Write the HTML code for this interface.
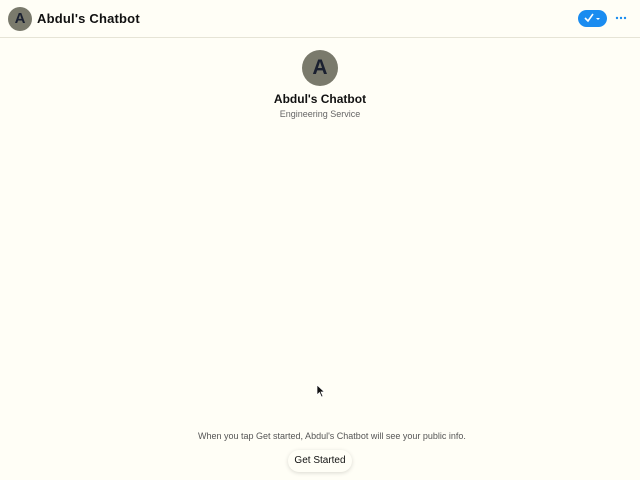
<!DOCTYPE html>
<html><head><style>
body{margin:0;width:640px;height:480px;background:#fffef6;font-family:"Liberation Sans",sans-serif;position:relative;overflow:hidden}
.hdr{position:absolute;left:0;top:0;width:640px;height:37px;border-bottom:1px solid #e6e4d6}
.av{position:absolute;border-radius:50%;background:#7a7a6c;color:#1a2030;font-weight:bold;text-align:center}
.t{position:absolute;white-space:nowrap}
</style></head><body>
<div class="hdr"></div>
<div class="av" style="left:8px;top:7px;width:24px;height:24px;line-height:24px;font-size:15px">A</div>
<div class="t" style="left:37px;top:11px;font-size:13px;font-weight:bold;color:#111;letter-spacing:0.2px">Abdul's Chatbot</div>
<div style="position:absolute;left:578px;top:10px;width:29px;height:17px;border-radius:9px;background:#1a8cf0"></div>
<svg style="position:absolute;left:583px;top:12px" width="20" height="12"><path d="M2 6 L5 9 L10 2" stroke="#fff" stroke-width="1.6" fill="none"/><path d="M13 6 L17 6 L15 8Z" fill="#fff"/></svg>
<svg style="position:absolute;left:615px;top:16px" width="12" height="4"><circle cx="2" cy="2" r="1.2" fill="#1a8cf0"/><circle cx="6" cy="2" r="1.2" fill="#1a8cf0"/><circle cx="10" cy="2" r="1.2" fill="#1a8cf0"/></svg>
<div class="av" style="left:302px;top:50px;width:36px;height:36px;line-height:36px;font-size:21px">A</div>
<div class="t" style="left:0;width:640px;text-align:center;top:92px;font-size:12px;font-weight:bold;color:#111">Abdul's Chatbot</div>
<div class="t" style="left:0;width:640px;text-align:center;top:109px;font-size:9px;color:#666">Engineering Service</div>
<div class="t" style="left:198px;top:431px;font-size:9px;color:#555">When you tap Get started, Abdul's Chatbot will see your public info.</div>
<div style="position:absolute;left:288px;top:450px;width:64px;height:22px;border-radius:11px;box-shadow:0 1px 4px rgba(0,0,0,.15);background:#fffef6;text-align:center;line-height:22px;font-size:10px;color:#111">Get Started</div>
<svg style="position:absolute;left:316px;top:384px" width="10" height="14"><path d="M1 1 L1 11 L3.5 8.5 L5.5 13 L7 12.3 L5 8 L8.5 8 Z" fill="#111" stroke="#fff" stroke-width=".7"/></svg>
</body></html>
